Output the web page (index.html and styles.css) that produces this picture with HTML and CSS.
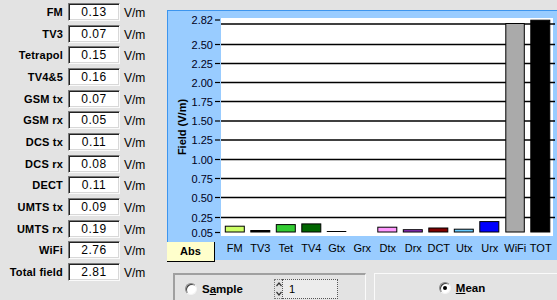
FILE: index.html
```html
<!DOCTYPE html>
<html>
<head>
<meta charset="utf-8">
<link rel="stylesheet" href="styles.css">
</head>
<body>
<div class="app">
  <div class="fields">
    <div class="lbl">FM</div><div class="box">0.13</div><div class="unit">V/m</div>
    <div class="lbl">TV3</div><div class="box">0.07</div><div class="unit">V/m</div>
    <div class="lbl">Tetrapol</div><div class="box">0.15</div><div class="unit">V/m</div>
    <div class="lbl">TV4&amp;5</div><div class="box">0.16</div><div class="unit">V/m</div>
    <div class="lbl">GSM tx</div><div class="box">0.07</div><div class="unit">V/m</div>
    <div class="lbl">GSM rx</div><div class="box">0.05</div><div class="unit">V/m</div>
    <div class="lbl">DCS tx</div><div class="box">0.11</div><div class="unit">V/m</div>
    <div class="lbl">DCS rx</div><div class="box">0.08</div><div class="unit">V/m</div>
    <div class="lbl">DECT</div><div class="box">0.11</div><div class="unit">V/m</div>
    <div class="lbl">UMTS tx</div><div class="box">0.09</div><div class="unit">V/m</div>
    <div class="lbl">UMTS rx</div><div class="box">0.19</div><div class="unit">V/m</div>
    <div class="lbl">WiFi</div><div class="box">2.76</div><div class="unit">V/m</div>
    <div class="lbl">Total field</div><div class="box">2.81</div><div class="unit">V/m</div>
  </div>
  <div class="right">
    <div class="chart">
      <svg class="plot" width="390" height="228" viewBox="0 0 390 228">
        <g transform="translate(-167,-10)">
          <rect x="221" y="18" width="332" height="218" fill="#ffffff"/>
          <g stroke="#000" stroke-width="1.3">
            <line x1="221" y1="24" x2="555" y2="24"/>
            <line x1="221" y1="44.5" x2="555" y2="44.5"/>
            <line x1="221" y1="63.5" x2="555" y2="63.5"/>
            <line x1="221" y1="82.5" x2="555" y2="82.5"/>
            <line x1="221" y1="101.5" x2="555" y2="101.5"/>
            <line x1="221" y1="121" x2="555" y2="121"/>
            <line x1="221" y1="140" x2="555" y2="140"/>
            <line x1="221" y1="159.5" x2="555" y2="159.5"/>
            <line x1="221" y1="178.5" x2="555" y2="178.5"/>
            <line x1="221" y1="197.5" x2="555" y2="197.5"/>
            <line x1="221" y1="217.5" x2="555" y2="217.5"/>
          </g>
          <g stroke="#000" stroke-width="1.2">
            <line x1="215" y1="20" x2="220" y2="20"/>
            <line x1="215" y1="44.5" x2="220" y2="44.5"/>
            <line x1="215" y1="63.5" x2="220" y2="63.5"/>
            <line x1="215" y1="82.5" x2="220" y2="82.5"/>
            <line x1="215" y1="101.5" x2="220" y2="101.5"/>
            <line x1="215" y1="121" x2="220" y2="121"/>
            <line x1="215" y1="140" x2="220" y2="140"/>
            <line x1="215" y1="159.5" x2="220" y2="159.5"/>
            <line x1="215" y1="178.5" x2="220" y2="178.5"/>
            <line x1="215" y1="197.5" x2="220" y2="197.5"/>
            <line x1="215" y1="217.5" x2="220" y2="217.5"/>
            <line x1="215" y1="232.5" x2="220" y2="232.5"/>
          </g>
          <g class="ytick" text-anchor="end">
            <text x="213" y="24">2.82</text>
            <text x="213" y="48.5">2.50</text>
            <text x="213" y="67.5">2.25</text>
            <text x="213" y="86.5">2.00</text>
            <text x="213" y="105.5">1.75</text>
            <text x="213" y="125">1.50</text>
            <text x="213" y="144">1.25</text>
            <text x="213" y="163.5">1.00</text>
            <text x="213" y="182.5">0.75</text>
            <text x="213" y="201.5">0.50</text>
            <text x="213" y="221.5">0.25</text>
            <text x="213" y="236.5">0.05</text>
          </g>
          <text class="ytitle" transform="translate(185.5,127) rotate(-90)" text-anchor="middle">Field (V/m)</text>
          <g stroke="#000" stroke-width="1">
            <rect x="225.3" y="226.2" width="19" height="5.8" fill="#ccff66"/>
            <rect x="250.8" y="230.5" width="19" height="1.5" fill="#000"/>
            <rect x="276.3" y="224.6" width="19" height="7.4" fill="#33cc33"/>
            <rect x="301.8" y="223.9" width="19" height="8.1" fill="#006600"/>
            <line x1="326.8" y1="231.5" x2="346.3" y2="231.5"/>
            <rect x="377.8" y="227.2" width="19" height="4.8" fill="#ff99ff"/>
            <rect x="403.3" y="229.7" width="19" height="2.3" fill="#9933cc"/>
            <rect x="428.8" y="228" width="19" height="4" fill="#800000"/>
            <rect x="454.3" y="229.2" width="19" height="2.8" fill="#66ccff"/>
            <rect x="479.8" y="221.6" width="19" height="10.4" fill="#0000ff"/>
            <rect x="505.8" y="23.5" width="18.5" height="208.5" fill="#aaaaaa"/>
            <rect x="530.8" y="20.2" width="19" height="211.8" fill="#000000"/>
          </g>
        </g>
      </svg>
      <div class="xrow">
        <div class="abs">Abs</div>
        <div class="xlabels">
          <span>FM</span><span>TV3</span><span>Tet</span><span>TV4</span><span>Gtx</span><span>Grx</span><span>Dtx</span><span>Drx</span><span>DCT</span><span>Utx</span><span>Urx</span><span>WiFi</span><span>TOT</span>
        </div>
      </div>
    </div>
    <div class="controls">
      <div class="group sample">
        <label class="opt"><span class="radio"></span><span class="otext">S<u>a</u>mple</span></label>
        <div class="spin">
          <svg width="8" height="18" viewBox="0 0 8 18">
            <path d="M1.5 6 L4 3 L6.5 6" fill="none" stroke="#333" stroke-width="1.2"/>
            <path d="M1.5 12 L4 15 L6.5 12" fill="none" stroke="#333" stroke-width="1.2"/>
          </svg>
        </div>
        <div class="count">1</div>
      </div>
      <div class="group mean">
        <label class="opt"><span class="radio on"></span><span class="otext"><u>M</u>ean</span></label>
      </div>
    </div>
  </div>
</div>
</body>
</html>
```

FILE: styles.css
```css
html, body {
  margin: 0;
  padding: 0;
}
body {
  background: #e3e3e3;
  font-family: "Liberation Sans", Arial, sans-serif;
  color: #000;
  width: 557px;
  height: 300px;
  overflow: hidden;
}
.app {
  display: flex;
  width: 557px;
  height: 300px;
}
.fields {
  width: 167px;
  flex: none;
  display: grid;
  grid-template-columns: 63px 52px auto;
  grid-auto-rows: 21.667px;
  column-gap: 5px;
  align-content: start;
  padding-top: 3px;
  box-sizing: border-box;
}
.lbl {
  font-weight: bold;
  font-size: 11px;
  letter-spacing: 0.2px;
  text-align: right;
  line-height: 18px;
  white-space: nowrap;
}
.box {
  height: 18px;
  box-sizing: border-box;
  background: #fff;
  border-top: 1px solid #7a7a7a;
  border-left: 1px solid #7a7a7a;
  border-right: 1px solid #fafafa;
  border-bottom: 1px solid #fafafa;
  box-shadow: inset 1px 1px 0 #222, inset -1px -1px 0 #d8d8d8;
  font-size: 12px;
  letter-spacing: 0.5px;
  line-height: 16px;
  text-align: center;
}
.unit {
  font-size: 12px;
  line-height: 18px;
  margin-left: -1px;
  padding-top: 1px;
}
.right {
  flex: 1;
  display: flex;
  flex-direction: column;
  padding-top: 10px;
}
.chart {
  height: 250px;
  background: #99ccff;
  box-shadow: inset 1px 1px 0 #3d95ee;
  display: flex;
  flex-direction: column;
}
.plot {
  display: block;
  flex: none;
}
.ytick {
  font-family: "Liberation Sans", Arial, sans-serif;
  font-size: 11px;
  fill: #000020;
}
.ytitle {
  font-family: "Liberation Sans", Arial, sans-serif;
  font-size: 11px;
  font-weight: bold;
  fill: #000;
}
.xrow {
  height: 22px;
  display: flex;
  align-items: flex-start;
}
.abs {
  width: 48px;
  height: 20px;
  margin-top: 4px;
  box-sizing: border-box;
  background: #ffffcc;
  border-right: 1px solid #000;
  border-bottom: 1px solid #000;
  font-weight: bold;
  font-size: 11px;
  line-height: 19px;
  text-align: center;
}
.xlabels {
  display: flex;
  margin-left: 7px;
  padding-top: 2px;
}
.xlabels span {
  width: 25.5px;
  text-align: center;
  font-size: 11px;
  line-height: 16px;
  white-space: nowrap;
}
.controls {
  flex: 1;
  display: flex;
  padding-top: 13px;
}
.group {
  box-sizing: border-box;
  display: flex;
  align-items: flex-start;
}
.sample {
  margin-left: 6px;
  width: 193px;
  border-top: 2px solid #a0a0a0;
  border-left: 2px solid #a0a0a0;
  border-right: 1px solid #fafafa;
  padding: 4px 0 0 10px;
}
.mean {
  margin-left: 8px;
  flex: 1;
  border-top: 1px solid #fafafa;
  border-left: 1px solid #fafafa;
  justify-content: center;
  padding: 7px 8px 0 0;
}
.opt {
  display: flex;
  align-items: center;
  height: 14px;
}
.sample .opt {
  width: 89px;
  margin-top: 3px;
}
.radio {
  width: 12px;
  height: 12px;
  box-sizing: border-box;
  border-radius: 50%;
  background: #fff;
  border: 1px solid #8a8a8a;
  border-right-color: #f4f4f4;
  border-bottom-color: #f4f4f4;
  box-shadow: inset 1px 1px 0 #404040;
  display: flex;
  align-items: center;
  justify-content: center;
}
.radio.on::after {
  content: "";
  width: 4px;
  height: 4px;
  border-radius: 50%;
  background: #000;
}
.otext {
  margin-left: 5px;
  font-weight: bold;
  font-size: 11.5px;
}
.spin {
  width: 8px;
  height: 20px;
  border: 1px dotted #777;
  border-right: none;
  box-sizing: border-box;
}
.spin svg {
  display: block;
}
.count {
  width: 56px;
  height: 20px;
  box-sizing: border-box;
  border: 1px dotted #555;
  background: #ececec;
  font-size: 11px;
  line-height: 18px;
  padding-left: 6px;
}
```
